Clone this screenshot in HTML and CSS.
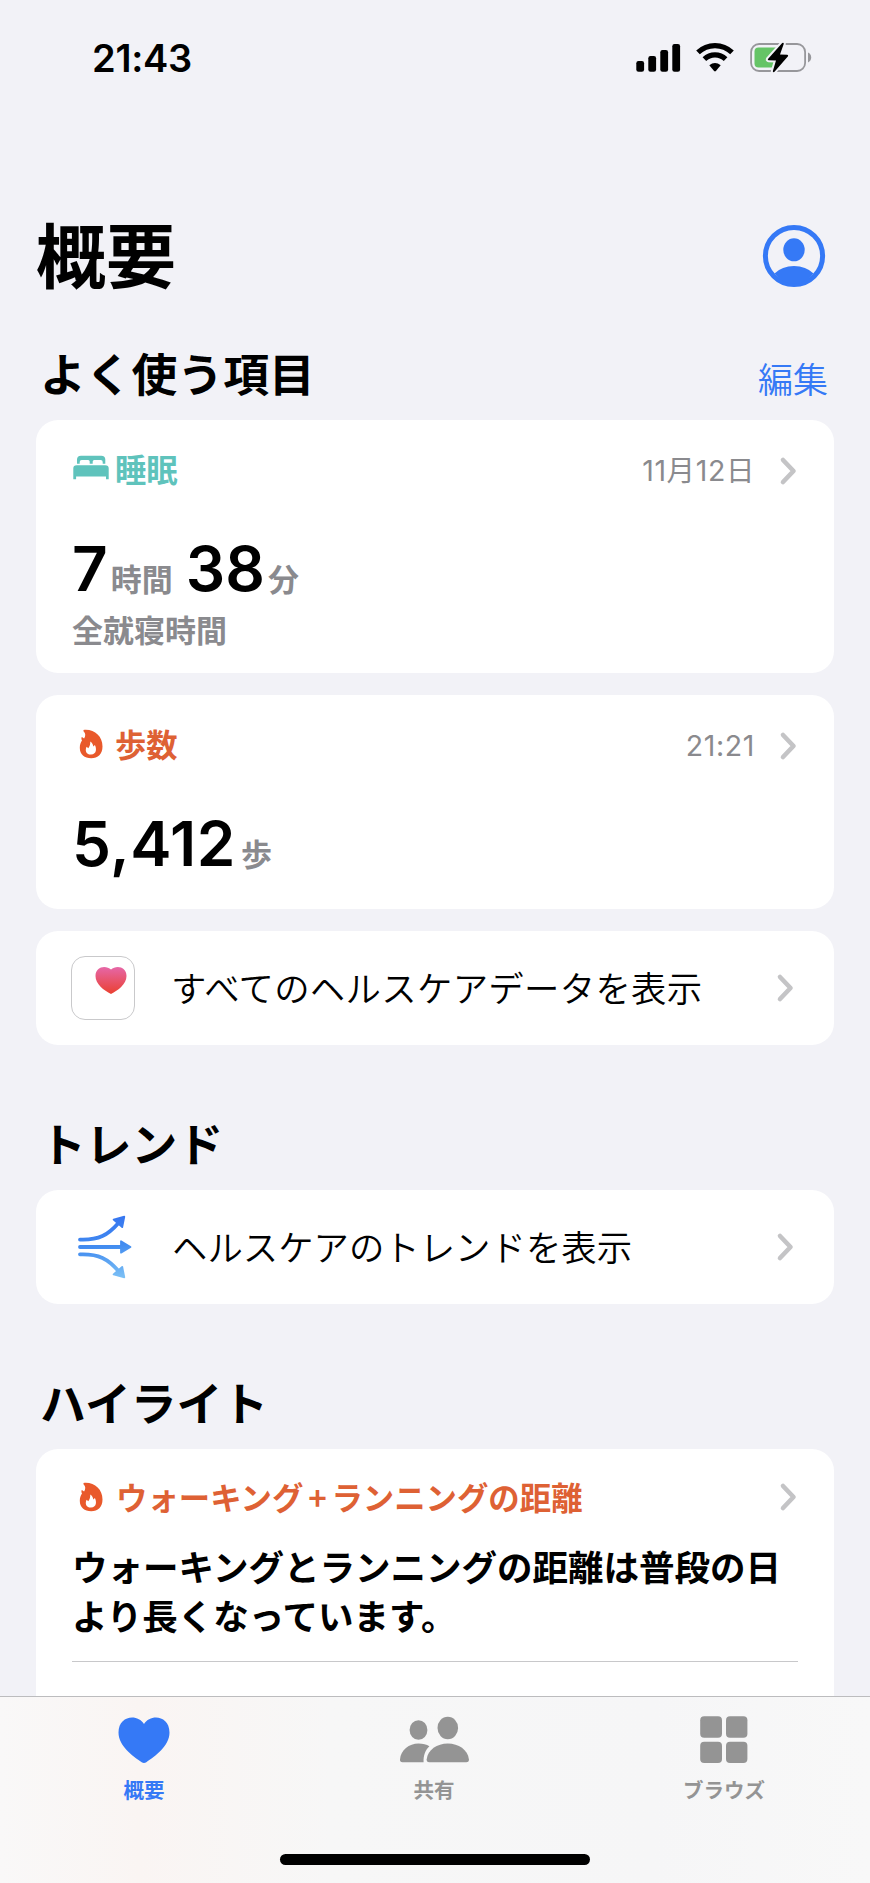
FILE: index.html
```
<!DOCTYPE html>
<html lang="ja">
<head>
<meta charset="utf-8">
<title>概要</title>
<link rel="stylesheet" href="styles.css">
</head>
<body>
<div class="screen">
  <header class="status">
    <span class="clock">21:43</span>
    <svg class="status-icons" width="176" height="32" viewBox="0 0 176 32">
      <rect x="0.3" y="19" width="7.8" height="10.8" rx="2.2"/>
      <rect x="12.3" y="14" width="7.8" height="15.8" rx="2.2"/>
      <rect x="24.3" y="8" width="7.8" height="21.8" rx="2.2"/>
      <rect x="36.3" y="2" width="7.8" height="27.8" rx="2.2"/>
      <g fill="none" stroke="#000" stroke-width="5.2">
        <path d="M62 10.400 A24.500 24.500 0 0 1 96 10.400"/>
        <path d="M68.400 17.100 A15.300 15.300 0 0 1 89.600 17.100"/>
      </g>
      <path d="M73.300 23.200 Q79 18.600 84.700 23.200 L79.900 29 Q79 29.900 78.100 29 Z"/>
      <rect x="115.100" y="2" width="54" height="27" rx="8" fill="none" stroke="#97979b" stroke-width="1.800"/>
      <path d="M172 10.600 Q175.200 12 175.200 15.500 Q175.200 19 172 20.400 Z" fill="#97979b"/>
      <path d="M122.500 5.500 H142 V25.500 H122.500 Q118.500 25.500 118.500 21.500 V9.500 Q118.500 5.500 122.500 5.500 Z" fill="#65c466"/>
      <path d="M146.200 1 L132 17 Q131.400 18.200 132.700 18.300 L140 18.400 L136.800 29.300 Q137.300 30.800 138.500 29.700 L152 14.200 Q152.600 12.900 151.200 12.800 L144 12.600 L147.800 1.700 Q147.600 0.200 146.200 1 Z" stroke="#f2f2f7" stroke-width="4" paint-order="stroke"/>
    </svg>
  </header>

  <div class="title-row">
    <h1>概要</h1>
    <svg width="64" height="64" viewBox="0 0 64 64">
      <circle cx="32" cy="32" r="28.600" fill="none" stroke="#3579f6" stroke-width="5"/>
      <ellipse cx="32" cy="25.800" rx="10.700" ry="11.500" fill="#3579f6"/>
      <path d="M12.500 49.500 Q20 42 32 42 Q44 42 51.500 49.500 Q43 60 32 60 Q21 60 12.500 49.500 Z" fill="#3579f6"/>
    </svg>
  </div>

  <section class="first">
    <div class="section-head"><h2>よく使う項目</h2><a class="edit">編集</a></div>
    <article class="card sleep">
      <div class="card-head teal">
        <svg class="kind" width="37" height="32" viewBox="0 0 37 32" fill="#5fc3bc">
          <path d="M5 10.800 V6.500 Q5 2.700 9 2.700 H29.200 Q33.300 2.700 33.300 6.500 V10.800 H30.700 V9 Q30.700 7 28.700 7 H22.200 Q20.700 7 20.700 8.500 V10.800 H17.700 V8.500 Q17.700 7 16.200 7 H9.700 Q7.700 7 7.700 9 V10.800 Z"/>
          <path d="M1.300 26.300 V15.500 Q1.300 12.200 4.700 12.200 H33.300 Q36.700 12.200 36.700 15.500 V26.300 H34 V23.500 H4.100 V26.300 Z"/>
        </svg>
        <span class="label">睡眠</span>
        <span class="when">11月12日</span>
        <svg class="chev" width="18" height="30" viewBox="0 0 18 30"><path d="M4 4 L14.500 15 L4 26"/></svg>
      </div>
      <div class="value"><b>7</b><i>時間</i><b class="second">38</b><i>分</i></div>
      <div class="sub">全就寝時間</div>
    </article>

    <article class="card steps">
      <div class="card-head orange">
        <svg class="kind" width="37" height="32" viewBox="0 0 37 32">
          <path d="M11.500 2 C22 .8 30.500 8 30.500 18.500 C30.500 26 26 30.300 19.200 30.300 C12.500 30.300 7.800 26.500 7.800 19.800 C7.800 16.500 8.700 14.500 10 12.500 C9.200 11 9.300 9.600 9.900 9 L12.100 10.400 C13.600 8.200 13.900 5.400 11.500 3.200 Z" fill="#e9592b"/>
          <path d="M18.300 13.600 C20.300 15 20.900 16.600 21.400 18.600 L22.900 17 C24.500 20 25.200 26.200 19 26.600 C13.400 26.600 13 21.500 14.600 18.700 L16.300 20.200 C18 18 18.300 16 18.300 13.600 Z" fill="#fff"/>
        </svg>
        <span class="label">歩数</span>
        <span class="when">21:21</span>
        <svg class="chev" width="18" height="30" viewBox="0 0 18 30"><path d="M4 4 L14.500 15 L4 26"/></svg>
      </div>
      <div class="value number"><b>5,412</b><i>歩</i></div>
    </article>

    <article class="card row">
      <span class="app">
        <svg width="32" height="29" viewBox="0 0 32 29">
          <defs><linearGradient id="pink" x1="0" y1="0" x2="0" y2="1"><stop offset="0" stop-color="#e667a8"/><stop offset="1" stop-color="#ea4030"/></linearGradient></defs>
          <path d="M16 3.600 C20.500 -1 31.500 -.2 31.500 10 C31.500 18 23 24.500 16 28 C9 24.500 .5 18 .5 10 C.5 -.2 11.500 -1 16 3.600 Z" fill="url(#pink)"/>
        </svg>
      </span>
      <span class="row-text wide">すべてのヘルスケアデータを表示</span>
      <svg class="chev" width="18" height="30" viewBox="0 0 18 30"><path d="M4 4 L14.500 15 L4 26"/></svg>
    </article>
  </section>

  <section>
    <div class="section-head"><h2>トレンド</h2></div>
    <article class="card row">
      <svg class="trend" width="65" height="66" viewBox="0 0 65 66">
        <defs><linearGradient id="blue" gradientUnits="userSpaceOnUse" x1="30" y1="1" x2="38" y2="65"><stop offset="0" stop-color="#3573f0"/><stop offset=".5" stop-color="#438df0"/><stop offset="1" stop-color="#7cc0f5"/></linearGradient></defs>
        <g fill="none" stroke="url(#blue)" stroke-width="3.800" stroke-linecap="round">
          <path d="M8 25.600 C27 26.300 36 21 46.500 9"/>
          <path d="M8 33.010 L50 33"/>
          <path d="M8 40.400 C27 39.700 36 45 46.500 57"/>
        </g>
        <g fill="url(#blue)" stroke="url(#blue)" stroke-width="1.800" stroke-linejoin="round">
          <path d="M52.300 2.700 L50.200 13.200 L41.600 5.600 Z"/>
          <path d="M58.500 33 L49 27.300 V38.700 Z"/>
          <path d="M52.300 63.300 L50.200 52.800 L41.600 60.400 Z"/>
        </g>
      </svg>
      <span class="row-text">ヘルスケアのトレンドを表示</span>
      <svg class="chev" width="18" height="30" viewBox="0 0 18 30"><path d="M4 4 L14.500 15 L4 26"/></svg>
    </article>
  </section>

  <section>
    <div class="section-head"><h2>ハイライト</h2></div>
    <article class="card highlight">
      <div class="card-head orange">
        <svg class="kind" width="37" height="32" viewBox="0 0 37 32">
          <path d="M11.500 2 C22 .8 30.500 8 30.500 18.500 C30.500 26 26 30.300 19.200 30.300 C12.500 30.300 7.800 26.500 7.800 19.800 C7.800 16.500 8.700 14.500 10 12.500 C9.200 11 9.300 9.600 9.900 9 L12.100 10.400 C13.600 8.200 13.900 5.400 11.500 3.200 Z" fill="#e9592b"/>
          <path d="M18.300 13.600 C20.300 15 20.900 16.600 21.400 18.600 L22.900 17 C24.500 20 25.200 26.200 19 26.600 C13.400 26.600 13 21.500 14.600 18.700 L16.300 20.200 C18 18 18.300 16 18.300 13.600 Z" fill="#fff"/>
        </svg>
        <span class="label">ウォーキング<span class="plus">+</span>ランニングの距離</span>
        <svg class="chev" width="18" height="30" viewBox="0 0 18 30"><path d="M4 4 L14.500 15 L4 26"/></svg>
      </div>
      <p class="message">ウォーキングとランニングの距離は普段の日<br>より長くなっています。</p>
      <hr>
    </article>
  </section>

  <nav class="tabs">
    <a class="tab active">
      <svg width="72" height="50" viewBox="0 0 72 50" fill="currentColor">
        <path d="M36 9 C42.500 -1.500 61.500 .5 61.500 17.500 C61.500 31 47 41.500 38.300 47.200 Q36 48.600 33.700 47.200 C25 41.500 10.500 31 10.500 17.500 C10.500 .5 29.500 -1.500 36 9 Z"/>
      </svg>
      <span>概要</span>
    </a>
    <a class="tab">
      <svg width="72" height="50" viewBox="0 0 72 50" fill="currentColor">
        <ellipse cx="20.500" cy="15" rx="8.900" ry="9.800"/>
        <path d="M4.500 47.200 Q1.800 47.200 2 44.500 C2.800 35 11 28.600 20.500 28.600 C25 28.600 28.500 29.500 31.400 31.300 C27.500 35 25.300 40 25.600 47.200 Z"/>
        <ellipse cx="49.800" cy="13" rx="10.300" ry="11.300"/>
        <path d="M31.300 47.200 Q28.400 47.200 28.700 44.300 C29.800 35 39 28.600 49.800 28.600 C60.600 28.600 69.800 35 70.900 44.300 Q71.200 47.200 68.300 47.200 Z"/>
      </svg>
      <span>共有</span>
    </a>
    <a class="tab">
      <svg width="72" height="50" viewBox="0 0 72 50" fill="currentColor">
        <rect x="12.200" y="1.200" width="21.800" height="21.600" rx="4"/><rect x="38" y="1.200" width="21.400" height="21.600" rx="4"/>
        <rect x="12.200" y="26.800" width="21.800" height="21.200" rx="4"/><rect x="38" y="26.800" width="21.400" height="21.200" rx="4"/>
      </svg>
      <span>ブラウズ</span>
    </a>
    <div class="home"></div>
  </nav>
</div>
</body>
</html>
```

FILE: styles.css
```
* { box-sizing: border-box; margin: 0; padding: 0; }
body { background: #f2f2f7; color: #000; font-family: "Noto Sans CJK JP", sans-serif; }
svg { display: block; flex: none; }
.screen { position: relative; width: 870px; height: 1883px; overflow: hidden; padding: 0 36px; }

.status { height: 116px; display: flex; align-items: center; justify-content: space-between; padding: 0 22px 0 56px; }
.clock { font: 600 38px/40px Inter, sans-serif; letter-spacing: -0.3px; }

.title-row { height: 80px; margin-top: 100px; display: flex; align-items: center; justify-content: space-between; padding-right: 8px; }
h1 { font-size: 70px; line-height: 72px; font-weight: 700; padding-bottom: 6px; }

section { padding-top: 68px; }
section.first { padding-top: 47px; }
.section-head { height: 60px; margin-bottom: 17px; padding: 0 6px 0 4px; display: flex; align-items: center; justify-content: space-between; }
h2 { font-size: 45.800px; line-height: 60px; font-weight: 700; padding-bottom: 2px; }
.edit { font-size: 35px; line-height: 40px; font-weight: 350; color: #3579f6; padding-top: 9px; }

.card { background: #fff; border-radius: 22px; padding: 0 36px; }
.card + .card { margin-top: 22px; }
.sleep { height: 253px; padding-top: 32px; }
.steps { height: 214px; padding-top: 32px; }
.row { height: 114px; display: flex; align-items: center; padding-right: 40px; }
.highlight { height: 420px; padding-top: 31px; }

.card-head { height: 36px; display: flex; align-items: center; padding-right: 1px; }
.card-head .chev { margin-top: 1px; }
.highlight .card-head .chev { margin-top: -3px; }
.kind { margin: -2px 6px 0 0; }
.label { font-size: 31.300px; line-height: 34px; font-weight: 700; flex: 1; white-space: nowrap; padding-bottom: 3px; }
.highlight .label { font-size: 31.400px; padding-left: 1px; }
.teal { color: #5fc3bc; }
.orange { color: #de6134; }
.plus { display: inline-block; width: 28px; text-align: center; }
.when { font: 400 28.500px/36px Inter, "Noto Sans CJK JP", sans-serif; letter-spacing: .6px; color: #8a8a8e; margin-right: 24px; padding-top: 2px; }
.chev path { fill: none; stroke: #c4c4c6; stroke-width: 4.600; stroke-linecap: round; stroke-linejoin: round; }

.value { height: 70px; margin-top: 46px; display: flex; align-items: baseline; }
.value b { font: 600 62px/70px Inter, sans-serif; }
.value i { font-style: normal; font-weight: 600; font-size: 31px; line-height: 40px; color: #8a8a8e; margin-left: 3px; }
.value .second { margin-left: 13px; }
.number b { letter-spacing: .5px; }
.number i { margin-left: 5px; }
.sub { font-size: 31px; line-height: 40px; font-weight: 600; color: #8a8a8e; margin-top: 5px; }

.app { width: 64px; height: 64px; border: 1.500px solid #c9c9cb; border-radius: 14px; padding: 9px 0 0 23px; margin: 0 36px 0 -1px; }
.trend { margin-right: 35px; }
.row-text { font-size: 35.400px; line-height: 44px; font-weight: 350; flex: 1; white-space: nowrap; padding-bottom: 2px; }
.wide { letter-spacing: .3px; }

.message { font-size: 35.500px; line-height: 49px; font-weight: 600; margin-top: 25px; white-space: nowrap; }
hr { border: 0; height: 1px; background: #c8c8ca; margin-top: 22px; }

.tabs { position: absolute; left: 0; bottom: 0; width: 870px; height: 187px; border-top: 1px solid #bcbcbe; background: linear-gradient(90deg, #f9f8f8 0, #faf5f3 16%, #f7f7f7 38%, #f6f6f7 75%, #f8f8f8 100%); display: grid; grid-template-columns: repeat(3, 1fr); align-items: start; }
.tab { display: flex; flex-direction: column; align-items: center; color: #949494; padding: 18px 2px 0 0; }
.tab span { font-size: 20.500px; line-height: 26px; font-weight: 600; margin-top: 11px; }
.tab.active { color: #3579f6; }
.home { position: absolute; left: 280px; bottom: 18px; width: 310px; height: 11px; border-radius: 6px; background: #000; }
```
